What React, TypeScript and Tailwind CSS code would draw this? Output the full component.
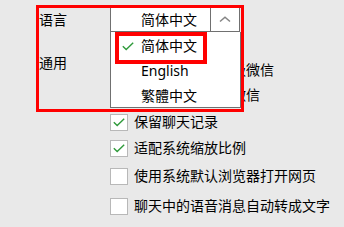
import React from "react";

const Check = ({ className = "" }: { className?: string }) => (
  <svg className={className} width="12" height="9" viewBox="0 0 12 9" fill="none">
    <path d="M0.8 4.2 L4.2 7.6 L11.2 0.8" stroke="#2f9a3b" strokeWidth="1.4" />
  </svg>
);

const Row = ({ checked, text, mt }: { checked: boolean; text: string; mt: string }) => (
  <div className={`flex h-[26px] items-center ${mt}`}>
    <div className="flex h-[17px] w-[18px] items-center justify-center border border-[#b8b8b8] bg-white">
      {checked && <Check />}
    </div>
    <span className="ml-[6px] whitespace-nowrap text-[14px] leading-[20px] text-black">{text}</span>
  </div>
);

export default function App() {
  return (
    <div
      className="relative h-[227px] w-[344px] overflow-hidden bg-[#e9e9e9] text-black"
      style={{ fontFamily: '"Noto Sans", "Noto Sans CJK SC", sans-serif' }}
    >
      {/* language row */}
      <div className="flex pt-[8px]">
        <div className="flex h-[24px] w-[110px] items-center pl-[39px] text-[14px] leading-[20px]">语言</div>
        <div className="flex h-[24px] w-[130px] border-x border-b border-[#707070] bg-white">
          <div className="flex flex-1 items-center pl-[30px] text-[14px] leading-[20px]">简体中文</div>
          <div className="flex w-[29px] items-center justify-center border-l border-[#707070]">
            <svg width="12" height="7" viewBox="0 0 12 7" fill="none">
              <path d="M1 5.5 L6 1.2 L11 5.5" stroke="#858585" strokeWidth="1.5" />
            </svg>
          </div>
        </div>
      </div>

      {/* general section */}
      <div className="mt-[25px] flex">
        <div className="w-[110px] pl-[39px]">
          <div className="mt-[-4px] text-[14px] leading-[20px]">通用</div>
        </div>
        <div className="flex flex-col">
          <Row checked={true} text="有更新时自动升级微信" mt="" />
          <Row checked={false} text="开机时自动启动微信" mt="mt-[-1px]" />
          <Row checked={true} text="保留聊天记录" mt="mt-[1px]" />
          <Row checked={true} text="适配系统缩放比例" mt="mt-0" />
          <Row checked={false} text="使用系统默认浏览器打开网页" mt="mt-[2px]" />
          <Row checked={false} text="聊天中的语音消息自动转成文字" mt="mt-[4px]" />
        </div>
      </div>

      {/* dropdown menu */}
      <div className="absolute left-[110px] top-[32px] h-[76px] w-[131px] border-x border-b border-[#707070] bg-white pt-[1px]">
        <div className="flex h-[25px] items-center">
          <div className="flex w-[30px] justify-end pr-[7px] pt-[1px]">
            <Check />
          </div>
          <span className="text-[14px] leading-[20px]">简体中文</span>
        </div>
        <div className="flex h-[25px] items-center pl-[30px] text-[14px] leading-[20px]">English</div>
        <div className="flex h-[25px] items-center pl-[30px] text-[14px] leading-[20px]">繁體中文</div>
      </div>

      {/* annotation boxes */}
      <div className="pointer-events-none absolute left-[36px] top-[5px] h-[107px] w-[208px] border-[3px] border-[#ff0000]" />
      <div className="pointer-events-none absolute left-[115px] top-[32px] h-[32px] w-[92px] border-[4px] border-[#ff0000]" />
    </div>
  );
}
